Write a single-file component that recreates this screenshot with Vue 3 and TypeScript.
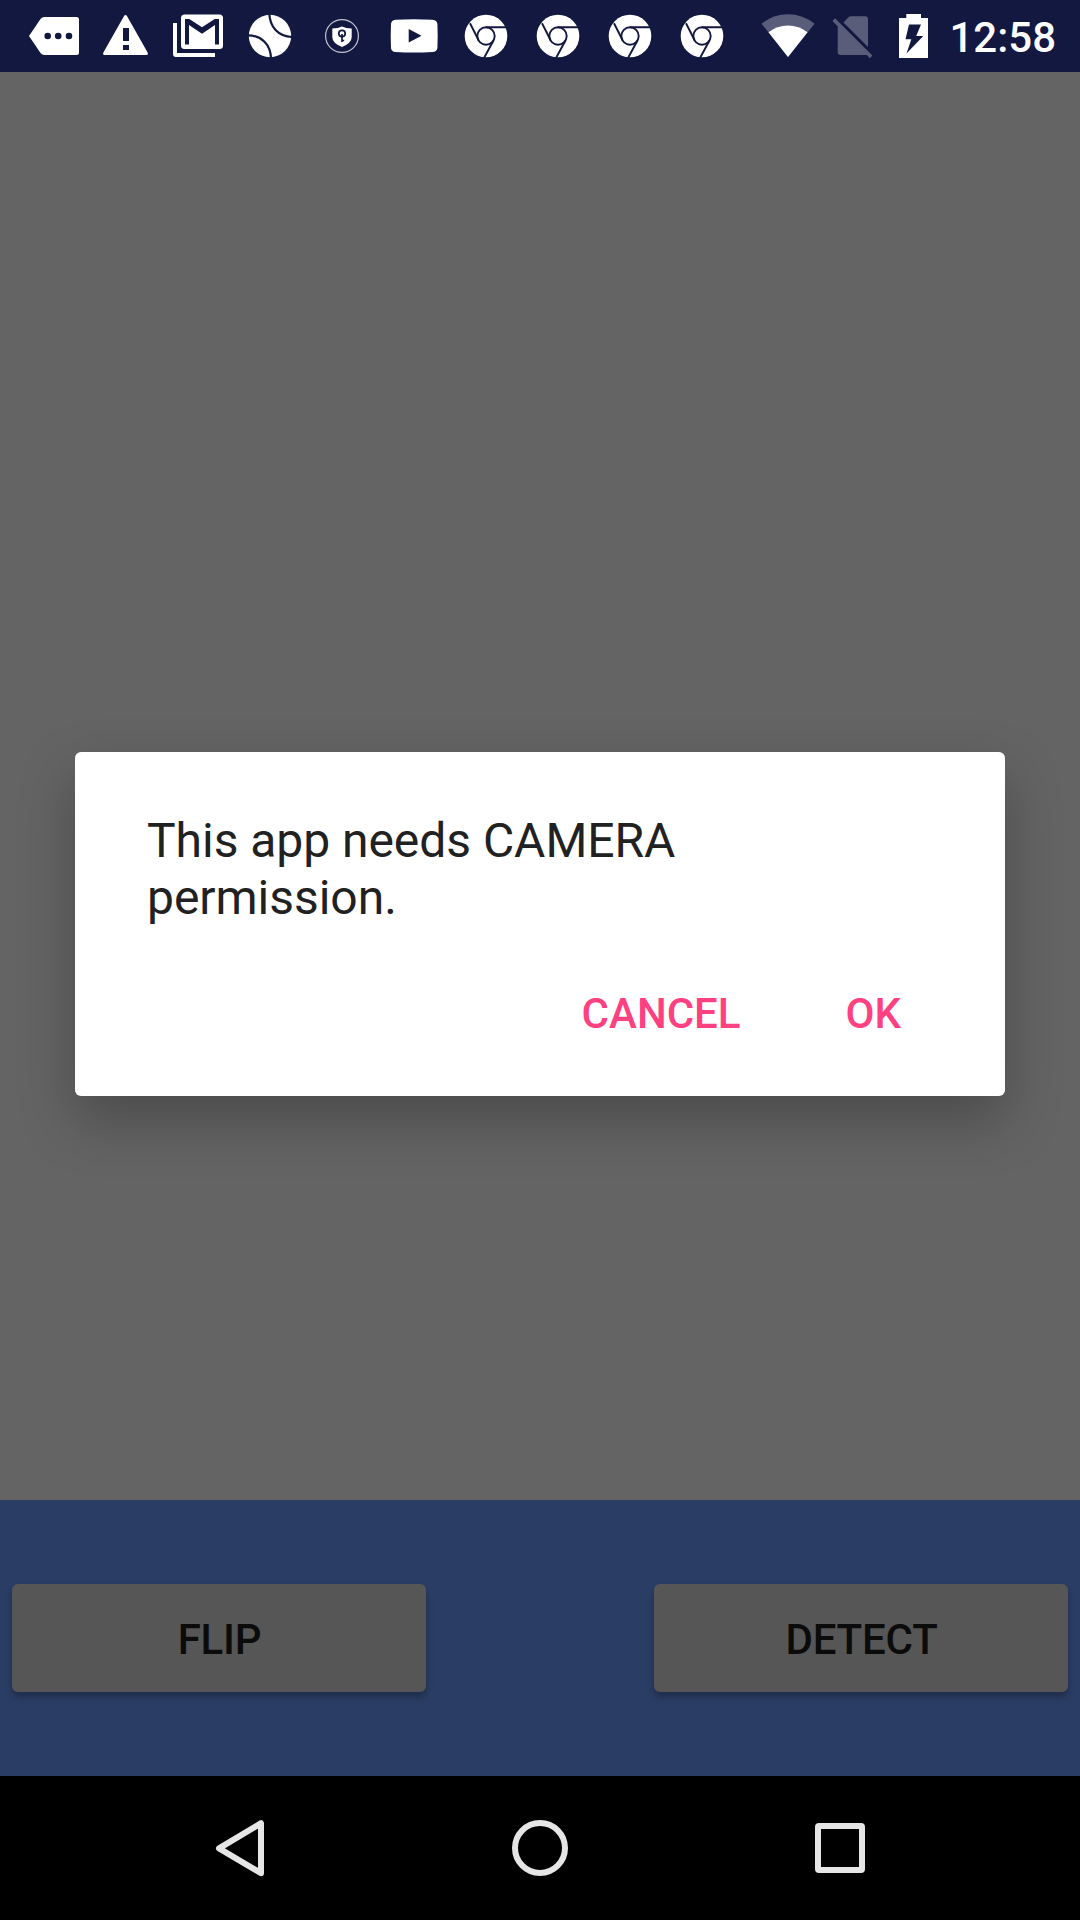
<script setup lang="ts">
import { ref } from 'vue'

const message = ref<string>('This app needs CAMERA permission.')
const dialogActions: string[] = ['Cancel', 'OK']
const cameraActions: string[] = ['Flip', 'Detect']
const chromeNotifications = 4
const time = '12:58'
</script>

<template>
  <div class="screen">
    <header class="status-bar">
      <div class="notifications">
        <svg class="slot" viewBox="0 0 72 72">
          <path fill="#fff" fill-rule="evenodd" d="M11 36 22.500 19Q24 17 26.500 17H58.500Q61 17 61 19.500V52.500Q61 55 58.500 55H26.500Q24 55 22.500 53ZM33 36a3.300 3.300 0 1 0-6.600 0a3.300 3.300 0 1 0 6.600 0M43.500 36a3.300 3.300 0 1 0-6.600 0a3.300 3.300 0 1 0 6.600 0M54.300 36a3.300 3.300 0 1 0-6.600 0a3.300 3.300 0 1 0 6.600 0" />
        </svg>
        <svg class="slot" viewBox="0 0 72 72">
          <path fill="#fff" fill-rule="evenodd" d="M33.900 16.200Q35.500 14 37.100 16.200L57.600 52.500Q58.500 55 56.500 55H14.500Q12.500 55 13.400 52.500ZM33 28V41H39V28ZM33 45V50H39V45Z" />
        </svg>
        <svg class="slot" viewBox="0 0 72 72">
          <path fill="#fff" d="M11 23H15V53H53V57H14Q11 57 11 54Z" />
          <rect x="19" y="14.500" width="42" height="34.500" rx="3.500" fill="#fff" />
          <path fill="#131840" d="M23 44.500V19H27.300L40 27.300 52.700 19H57V44.500H53V25L40 33.700 27 25V44.500Z" />
        </svg>
        <svg class="slot" viewBox="0 0 72 72">
          <circle cx="36" cy="36" r="21.200" fill="#fff" />
          <path fill="none" stroke="#131840" stroke-width="2.200" d="M35.300 13C35.800 27 44 36.500 58 37M14 35.300C28 35.500 37 45 37 59" />
        </svg>
        <svg class="slot" viewBox="0 0 72 72">
          <circle cx="36" cy="36" r="16.400" fill="none" stroke="#c3c4cf" stroke-width="1.200" />
          <path fill="#fff" d="M26.300 28.500Q32 28.500 36 26.500Q40 28.500 45.700 28.500V37Q45.700 43 36 47Q26.300 43 26.300 37Z" />
          <circle cx="36" cy="33.500" r="3.200" fill="#fff" stroke="#131840" stroke-width="1.700" />
          <path fill="none" stroke="#131840" stroke-width="1.700" d="M36 34V42M36 40.500H38.200" />
        </svg>
        <svg class="slot" viewBox="0 0 72 72">
          <path fill="#fff" fill-rule="evenodd" d="M17.500 19.700Q36 18.700 54.500 19.700Q59 20 59.400 24Q60 36 59.400 48Q59 51.700 54.500 52Q36 53 17.500 52Q13.400 51.700 13 48Q12.400 36 13 24Q13.400 20 17.500 19.700ZM30.700 29V42.500L43.500 35.700Z" />
        </svg>
        <svg v-for="n in chromeNotifications" :key="n" class="slot" viewBox="0 0 72 72">
          <circle cx="36" cy="36" r="21.300" fill="#fff" />
          <g fill="none" stroke="#131840" stroke-width="1.900">
            <circle cx="36" cy="36" r="8.700" />
            <path d="M36 27.300H56M20 23.200 28.500 40M43.500 40.500 34 58" />
          </g>
        </svg>
      </div>
      <div class="system">
        <svg class="wifi" viewBox="0 0 56 72">
          <path fill="#fff" fill-opacity=".3" d="M28 57 1.500 23.700Q13 14.200 28 14.200T54.500 23.700Z" />
          <path fill="#fff" d="M28 57 8.500 32.300Q17 25.500 28 25.500T47.500 32.300Z" />
        </svg>
        <svg class="sim" viewBox="0 0 42 72">
          <g fill="#fff" fill-opacity=".3">
            <path d="M11.500 22.500 16.500 17.300Q17.500 16.300 19 16.300H33Q36 16.300 36 19.300V47Z" />
            <path d="M3 18.200 0.500 21 5.700 26.200V52Q5.700 55 8.700 55H33Q34 55 34.500 54.700L38 58.200 40.300 55.500Z" />
          </g>
        </svg>
        <svg class="battery" viewBox="0 0 30 72">
          <path fill="#fff" fill-rule="evenodd" d="M7.300 14H22V18H29V58H0V18H7.300ZM10 24.500 6.500 39.300H12.300L7.500 53.500 24.300 36H17.200L22 24.500Z" />
        </svg>
        <span class="clock">{{ time }}</span>
      </div>
    </header>

    <main class="preview">
      <section class="dialog" role="dialog">
        <p class="message">{{ message }}</p>
        <div class="dialog-actions">
          <button v-for="label in dialogActions" :key="label" class="text-button">{{ label }}</button>
        </div>
      </section>
    </main>

    <section class="controls">
      <button v-for="label in cameraActions" :key="label" class="raised-button">{{ label }}</button>
    </section>

    <nav class="nav-bar">
      <svg viewBox="0 0 72 72">
        <path fill="none" stroke="#e6e6e6" stroke-width="6" stroke-linejoin="round" d="M15 36.300 57 11.200V61.200Z" />
      </svg>
      <svg viewBox="0 0 72 72">
        <circle cx="36" cy="36" r="25" fill="none" stroke="#e6e6e6" stroke-width="6" />
      </svg>
      <svg viewBox="0 0 72 72">
        <path fill="#e6e6e6" fill-rule="evenodd" d="M15 11H57Q61 11 61 15V57Q61 61 57 61H15Q11 61 11 57V15Q11 11 15 11ZM17 17V55H55V17Z" />
      </svg>
    </nav>
  </div>
</template>

<style>
body {
  margin: 0;
  background: #000;
}
</style>

<style scoped>
.screen {
  display: flex;
  flex-direction: column;
  width: 1080px;
  height: 1920px;
  overflow: hidden;
  background: #646464;
  font-family: Roboto, 'Liberation Sans', sans-serif;
}

button {
  margin: 0;
  padding: 0;
  border: 0;
  background: none;
  font: 500 42px/50px Roboto, 'Liberation Sans', sans-serif;
  text-transform: uppercase;
}

svg {
  display: block;
  flex: none;
}

.status-bar {
  display: flex;
  flex: none;
  justify-content: space-between;
  height: 72px;
  padding: 0 24px 0 18px;
  background: #131840;
}

.notifications,
.system {
  display: flex;
}

.slot {
  width: 72px;
  height: 72px;
}

.wifi {
  width: 56px;
  height: 72px;
}

.sim {
  width: 42px;
  height: 72px;
  margin-left: 16px;
}

.battery {
  width: 30px;
  height: 72px;
  margin-left: 25px;
}

.clock {
  margin-left: 20px;
  color: #fff;
  font-size: 42px;
  font-weight: 500;
  line-height: 76px;
}

.preview {
  display: flex;
  flex: 1;
  flex-direction: column;
  padding: 680px 75px 0;
}

.dialog {
  display: flex;
  flex-direction: column;
  box-sizing: border-box;
  height: 344px;
  padding: 60px 72px 0;
  border-radius: 6px;
  background: #fff;
  box-shadow: 0 24px 56px rgba(0, 0, 0, 0.26);
}

.message {
  margin: 0;
  color: #212121;
  font-size: 48px;
  line-height: 57px;
  letter-spacing: -0.04px;
}

.dialog-actions {
  display: flex;
  justify-content: flex-end;
  gap: 27px;
  margin-top: 63px;
  margin-right: -7px;
}

.text-button {
  min-width: 132px;
  padding: 0 39px;
  color: #ff4081;
}

.controls {
  display: flex;
  flex: none;
  align-items: center;
  justify-content: space-between;
  height: 276px;
  padding: 0 12px;
  background: #2a3d64;
}

.raised-button {
  box-sizing: border-box;
  width: 414px;
  height: 108px;
  padding: 3px 0 0 1px;
  border-radius: 6px;
  background: #565656;
  box-shadow: 0 5px 7px rgba(0, 0, 0, 0.25);
  color: #0b0b0b;
  letter-spacing: -0.2px;
}

.nav-bar {
  display: flex;
  flex: none;
  align-items: center;
  justify-content: center;
  gap: 228px;
  height: 144px;
  background: #000;
}

.nav-bar svg {
  width: 72px;
  height: 72px;
}
</style>
